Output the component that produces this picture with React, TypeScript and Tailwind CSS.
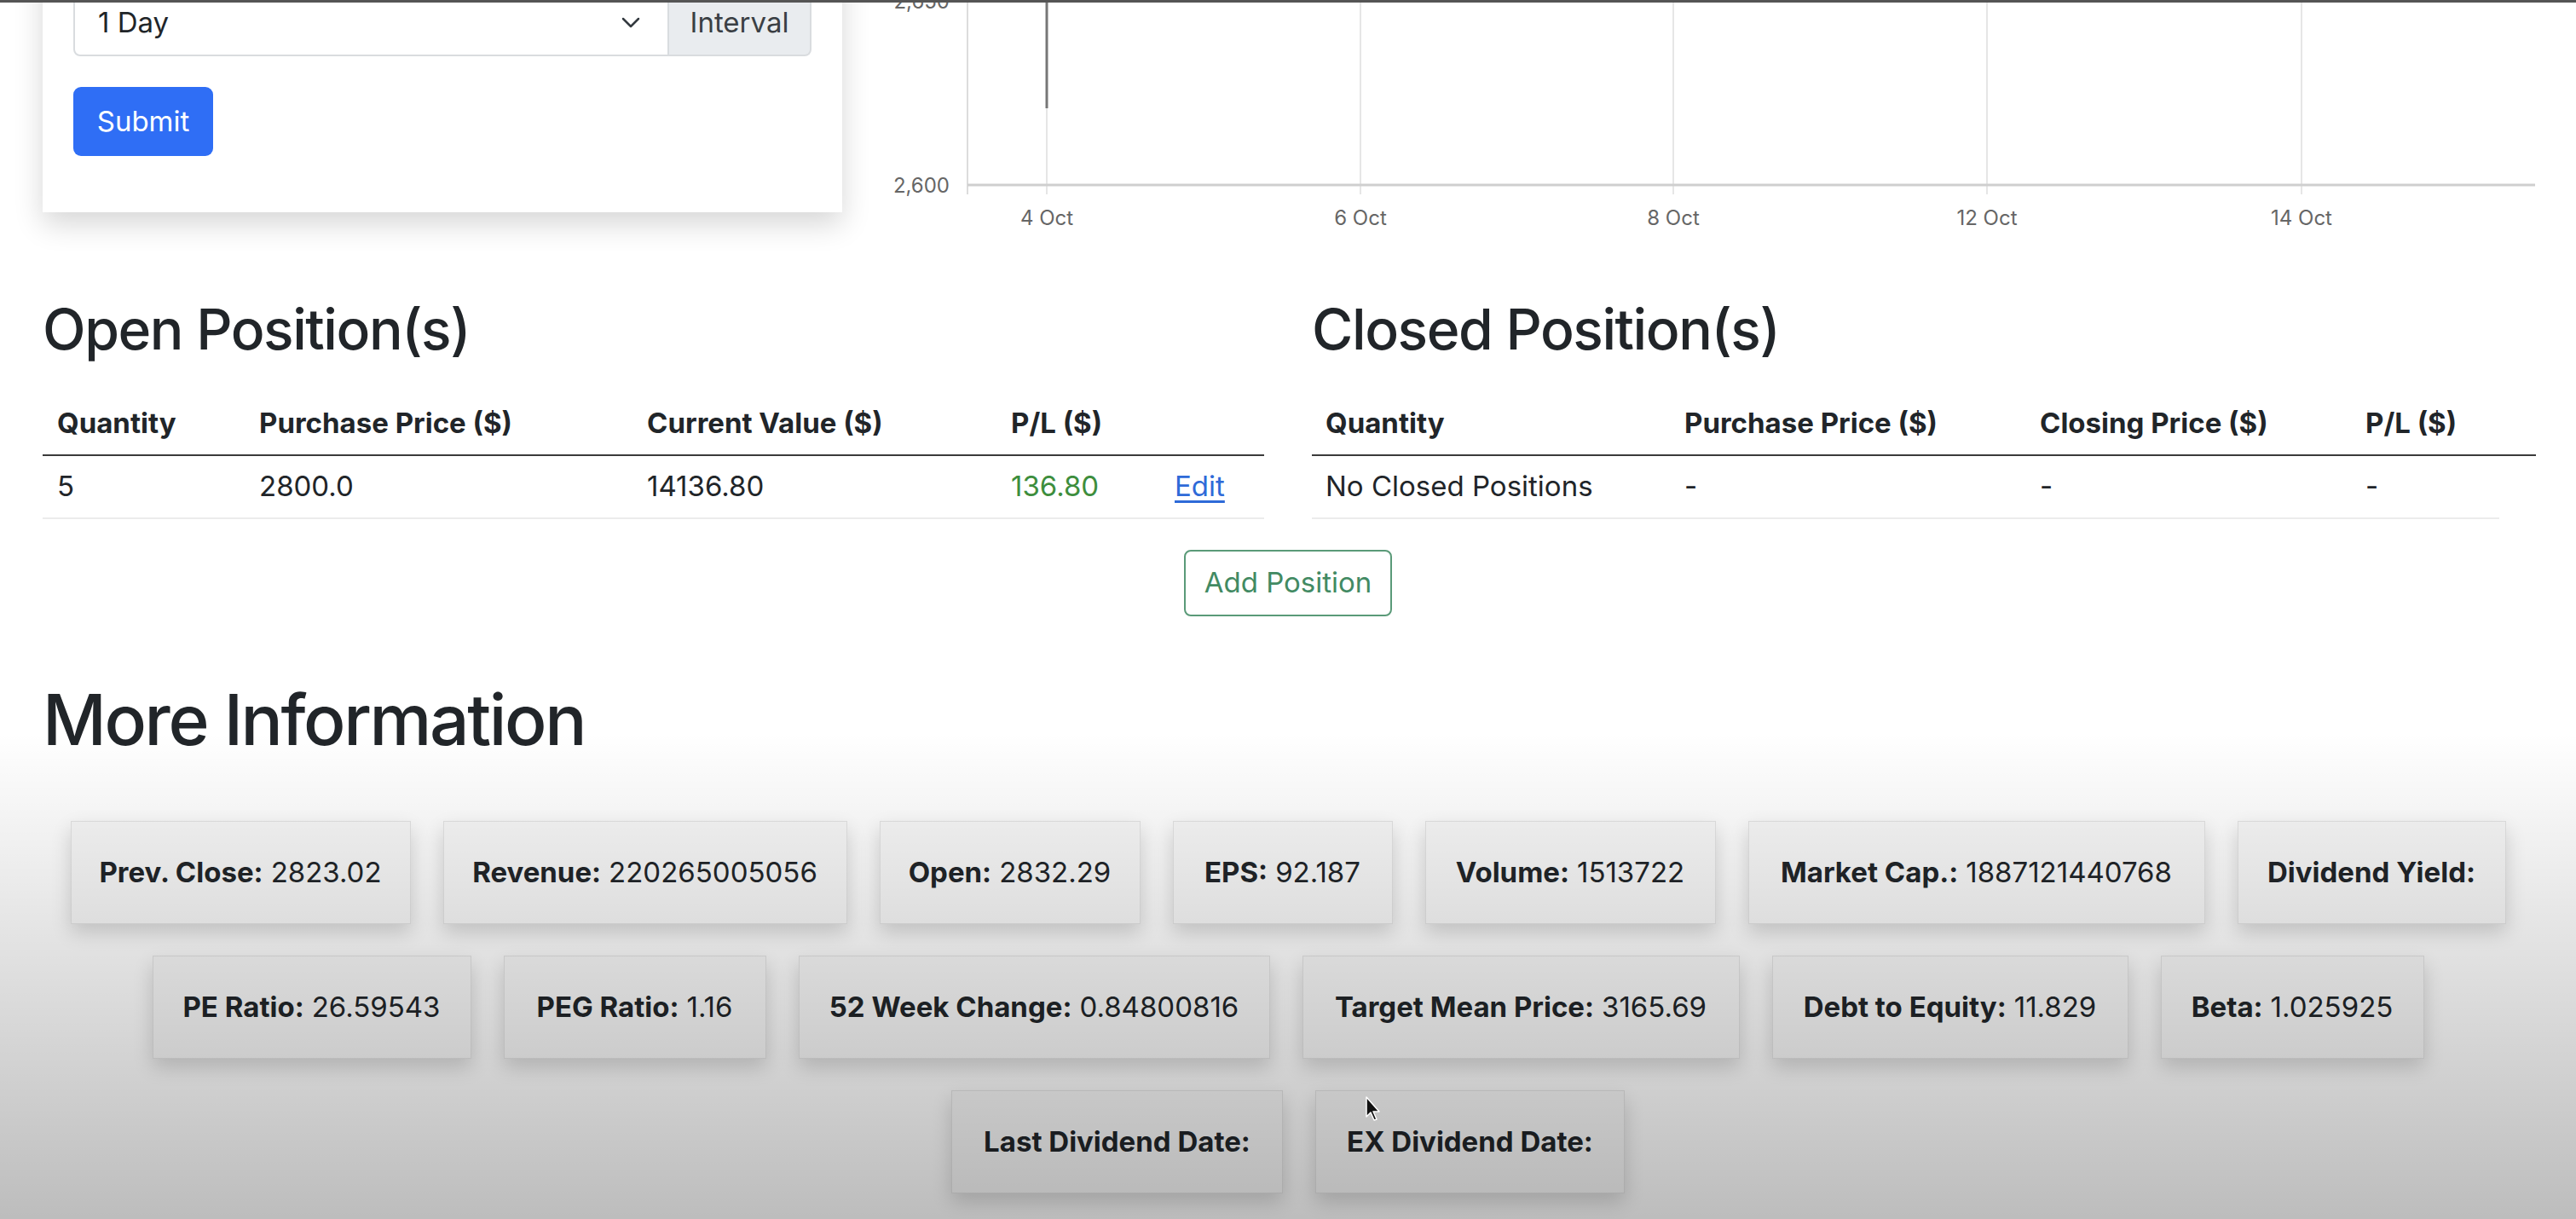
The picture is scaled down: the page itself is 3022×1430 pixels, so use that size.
import React from 'react';

type Stat = { label: string; value: string; w: string };

const rows: Stat[][] = [
  [
    { label: 'Prev. Close:', value: '2823.02', w: 'w-[399px]' },
    { label: 'Revenue:', value: '220265005056', w: 'w-[474px]' },
    { label: 'Open:', value: '2832.29', w: 'w-[306px]' },
    { label: 'EPS:', value: '92.187', w: 'w-[258px]' },
    { label: 'Volume:', value: '1513722', w: 'w-[341px]' },
    { label: 'Market Cap.:', value: '1887121440768', w: 'w-[536px]' },
    { label: 'Dividend Yield:', value: '', w: 'w-[315px]' },
  ],
  [
    { label: 'PE Ratio:', value: '26.59543', w: 'w-[374px]' },
    { label: 'PEG Ratio:', value: '1.16', w: 'w-[308px]' },
    { label: '52 Week Change:', value: '0.84800816', w: 'w-[553px]' },
    { label: 'Target Mean Price:', value: '3165.69', w: 'w-[513px]' },
    { label: 'Debt to Equity:', value: '11.829', w: 'w-[418px]' },
    { label: 'Beta:', value: '1.025925', w: 'w-[309px]' },
  ],
  [
    { label: 'Last Dividend Date:', value: '', w: 'w-[389px]' },
    { label: 'EX Dividend Date:', value: '', w: 'w-[363px]' },
  ],
];

const xTicks = [
  { x: 188, label: '4 Oct' },
  { x: 556, label: '6 Oct' },
  { x: 923, label: '8 Oct' },
  { x: 1291, label: '12 Oct' },
  { x: 1660, label: '14 Oct' },
];

const PriceChart: React.FC = () => (
  <svg width="1940" height="320" viewBox="0 0 1940 320" className="ml-[52px] shrink-0">
    {/* gridlines */}
    <line x1="95" y1="49" x2="1934" y2="49" stroke="#e6e6e6" strokeWidth="2" />
    {xTicks.map((t) => (
      <line key={t.x} x1={t.x} y1="0" x2={t.x} y2="276" stroke="#e6e6e6" strokeWidth="2" />
    ))}
    <line x1="95" y1="0" x2="95" y2="276" stroke="#dcdcdc" strokeWidth="2" />
    <line x1="95" y1="265" x2="1934" y2="265" stroke="#cfcfcf" strokeWidth="3" />
    {/* candle */}
    <line x1="188" y1="0" x2="188" y2="175" stroke="#777" strokeWidth="3" />
    <text x="74" y="58" textAnchor="end" fontSize="24" fill="#666" fontFamily="Inter, sans-serif">2,650</text>
    <text x="74" y="274" textAnchor="end" fontSize="24" fill="#666" fontFamily="Inter, sans-serif">2,600</text>
    {xTicks.map((t) => (
      <text key={t.label} x={t.x} y="312" textAnchor="middle" fontSize="24" fill="#666" fontFamily="Inter, sans-serif">
        {t.label}
      </text>
    ))}
  </svg>
);

const App: React.FC = () => {
  return (
    <div className="relative w-[3022px] h-[1430px] overflow-hidden bg-white text-[#212529] font-['Inter',sans-serif]">
      <div className="px-[50px]">
        {/* form card + chart */}
        <div className="flex items-start mt-[-48px]">
          <div className="w-[938px] shrink-0 bg-white px-[36px] pt-[36px] pb-[66px] shadow-[0_14px_32px_rgba(0,0,0,0.16)]">
            <div className="flex h-[78px] text-[33px]">
              <div className="flex-1 flex items-center justify-between pl-[27px] pr-[32px] border-2 border-[#d9dcdf] rounded-l-[8px] bg-white">
                <span>1 Day</span>
                <svg width="22" height="14" viewBox="0 0 22 14">
                  <polyline points="2,2 11,11 20,2" fill="none" stroke="#343a40" strokeWidth="2.5" strokeLinecap="round" strokeLinejoin="round" />
                </svg>
              </div>
              <div className="w-[167px] flex items-center justify-center bg-[#e9ecef] border-2 border-l-0 border-[#d9dcdf] rounded-r-[8px] text-[#3a3f44]">
                Interval
              </div>
            </div>
            <button className="mt-[36px] h-[81px] w-[164px] rounded-[9px] bg-[#2f6ef5] text-white text-[33px]">
              Submit
            </button>
          </div>
          <PriceChart />
        </div>

        {/* positions */}
        <div className="grid grid-cols-2 gap-x-[56px] mt-[75px]">
          <div>
            <h2 className="text-[66px] font-medium leading-[79px] tracking-[-0.022em]">Open Position(s)</h2>
            <div className="mt-[34px] text-[33px]">
              <div className="flex h-[75px] items-center border-b-2 border-[#3a3a3a] font-bold">
                <div className="w-[237px] pl-[17px]">Quantity</div>
                <div className="w-[455px] pl-[17px]">Purchase Price ($)</div>
                <div className="w-[427px] pl-[17px]">Current Value ($)</div>
                <div className="w-[192px] pl-[17px]">P/L ($)</div>
                <div className="flex-1" />
              </div>
              <div className="flex h-[74px] items-center border-b-2 border-[#ececec]">
                <div className="w-[237px] pl-[17px]">5</div>
                <div className="w-[455px] pl-[17px]">2800.0</div>
                <div className="w-[427px] pl-[17px]">14136.80</div>
                <div className="w-[192px] pl-[17px] text-[#3d8e3d]">136.80</div>
                <div className="flex-1 pl-[17px]">
                  <a className="text-[#2e6ad8] underline underline-offset-[5px]">Edit</a>
                </div>
              </div>
            </div>
          </div>
          <div>
            <h2 className="text-[66px] font-medium leading-[79px] tracking-[-0.022em]">Closed Position(s)</h2>
            <div className="mt-[34px] text-[33px]">
              <div className="flex h-[75px] items-center border-b-2 border-[#3a3a3a] font-bold w-[1436px]">
                <div className="w-[421px] pl-[16px]">Quantity</div>
                <div className="w-[417px] pl-[16px]">Purchase Price ($)</div>
                <div className="w-[382px] pl-[16px]">Closing Price ($)</div>
                <div className="flex-1 pl-[16px]">P/L ($)</div>
              </div>
              <div className="flex h-[74px] items-center border-b-2 border-[#ececec] w-[1393px]">
                <div className="w-[421px] pl-[16px]">No Closed Positions</div>
                <div className="w-[417px] pl-[16px]">-</div>
                <div className="w-[382px] pl-[16px]">-</div>
                <div className="flex-1 pl-[16px]">-</div>
              </div>
            </div>
          </div>
        </div>

        <div className="flex justify-center mt-[36px]">
          <button className="h-[78px] w-[244px] rounded-[8px] border-2 border-[#5a9a78] text-[#428a63] text-[33px]">
            Add Position
          </button>
        </div>

        {/* more information */}
        <h1 className="mt-[73px] text-[82px] font-medium leading-[98px] tracking-[-0.029em]">More Information</h1>
        <div className="mt-[69px] flex flex-col gap-[37px]">
          {rows.map((row, i) => (
            <div key={i} className="flex justify-center gap-[38px]">
              {row.map((s) => (
                <div
                  key={s.label}
                  className={`${s.w} h-[121px] flex items-center justify-center bg-[#f7f7f7] border border-[#e3e3e3] shadow-[0_10px_22px_rgba(0,0,0,0.16)] text-[33px] whitespace-nowrap`}
                >
                  <span className="font-bold">{s.label}</span>
                  {s.value && <span className="ml-[9px]">{s.value}</span>}
                </div>
              ))}
            </div>
          ))}
        </div>
      </div>

      {/* video fade at the bottom */}
      <div className="pointer-events-none absolute left-0 right-0 top-[860px] bottom-0 bg-linear-to-b from-black/0 to-black/[0.26]" />
      {/* browser edge */}
      <div className="absolute left-0 right-0 top-0 h-[3px] bg-[#555]" />
      {/* mouse cursor */}
      <svg className="absolute left-[1601px] top-[1286px]" width="20" height="30" viewBox="0 0 20 30">
        <path d="M2 1 L2 24 L7 19 L11 28 L14 27 L10 18 L17 18 Z" fill="#111" stroke="#fff" strokeWidth="1.5" strokeLinejoin="round" />
      </svg>
    </div>
  );
};

export default App;
